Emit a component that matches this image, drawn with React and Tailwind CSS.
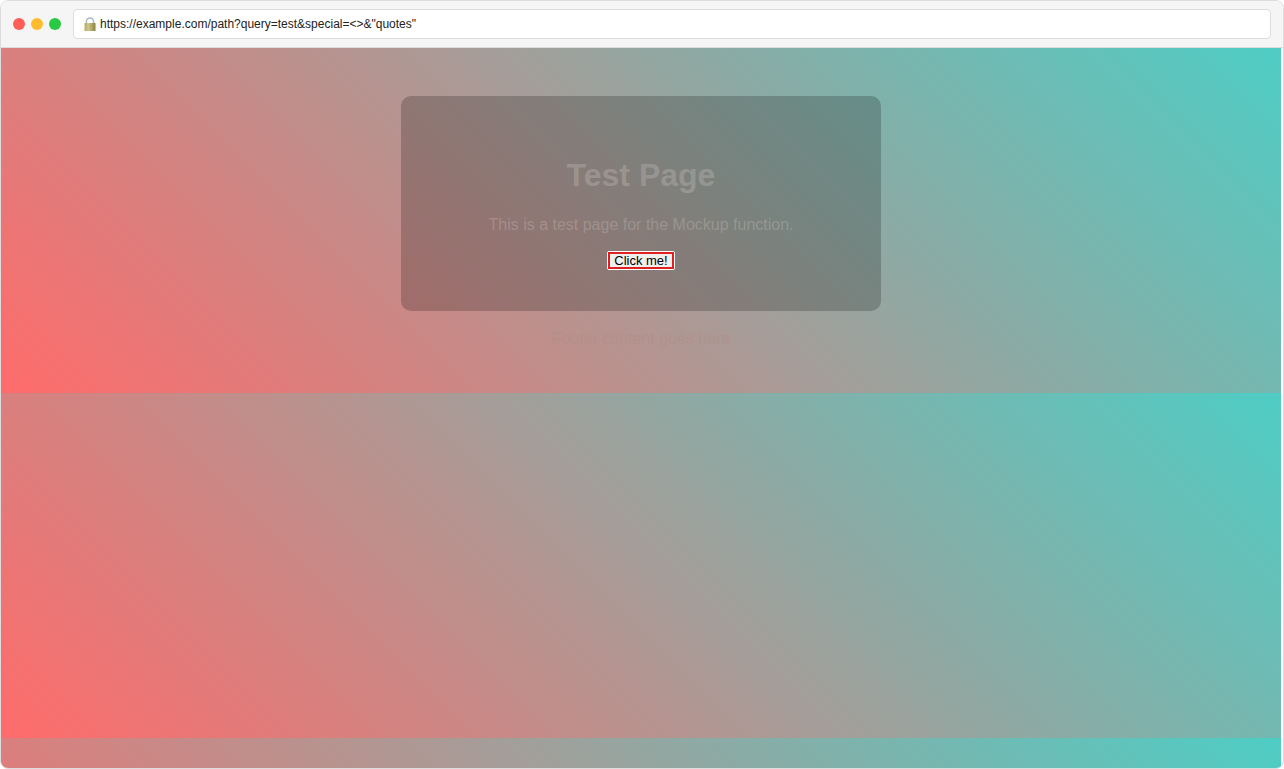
function LockIcon() {
  return (
    <svg className="h-[15px] w-3 shrink-0" viewBox="0 0 12 15" aria-hidden="true">
      <defs>
        <linearGradient id="lockBody" x1="0" x2="1" y1="0" y2="0">
          <stop offset="0" stopColor="#b5aa62" />
          <stop offset="0.35" stopColor="#cfc789" />
          <stop offset="1" stopColor="#8a8040" />
        </linearGradient>
      </defs>
      <path d="M2.4 7V4.6a3.6 3.6 0 0 1 7.2 0V7" fill="none" stroke="#a9b8c4" strokeWidth="1.5" />
      <rect x="0.5" y="6" width="11" height="8" rx="0.6" fill="url(#lockBody)" />
    </svg>
  );
}

function BrowserBar() {
  return (
    <header className="flex h-[47px] shrink-0 items-center gap-3 border-b border-[#dddddd] bg-[#f5f5f5] px-3">
      <div className="flex gap-1.5">
        <span className="size-3 rounded-full bg-[#ff5f57]" />
        <span className="size-3 rounded-full bg-[#ffbd2e]" />
        <span className="size-3 rounded-full bg-[#28ca42]" />
      </div>
      <div className="flex h-[30px] min-w-0 flex-1 items-center gap-1 rounded border border-[#dddddd] bg-white px-2.5">
        <LockIcon />
        <input
          type="text"
          aria-label="Address"
          className="min-w-0 flex-1 bg-transparent text-xs text-[#222222] outline-none"
          defaultValue={'https://example.com/path?query=test&special=<>&"quotes"'}
        />
      </div>
    </header>
  );
}

export default function App() {
  return (
    <div className="flex min-h-screen flex-col overflow-hidden rounded-lg border border-[#dddddd] bg-white font-['Liberation_Sans',Arial,sans-serif]">
      <BrowserBar />
      <main className="mr-0.5 flex flex-1 flex-col items-center gap-4 bg-[linear-gradient(45deg,#ff6b6b,#4ecdc4)] bg-[length:100%_345px] px-5 pt-12 text-center text-base">
        <section className="flex w-full max-w-[480px] flex-col items-center rounded-[10px] bg-black/20 px-10 pt-[61px] pb-[41px] text-[#fff3ee]/20">
          <h1 className="text-[32px] leading-9 font-bold">Test Page</h1>
          <p className="mt-5 leading-6">This is a test page for the Mockup function.</p>
          <button
            type="button"
            className="mt-[14px] rounded-xs border border-white bg-[#efefef] text-[13px] leading-[13px] text-black"
          >
            <span className="block border-2 border-[#e02020] px-1">Click me!</span>
          </button>
        </section>
        <p className="leading-6 text-[#b08e88]/60">Footer content goes here</p>
      </main>
    </div>
  );
}
